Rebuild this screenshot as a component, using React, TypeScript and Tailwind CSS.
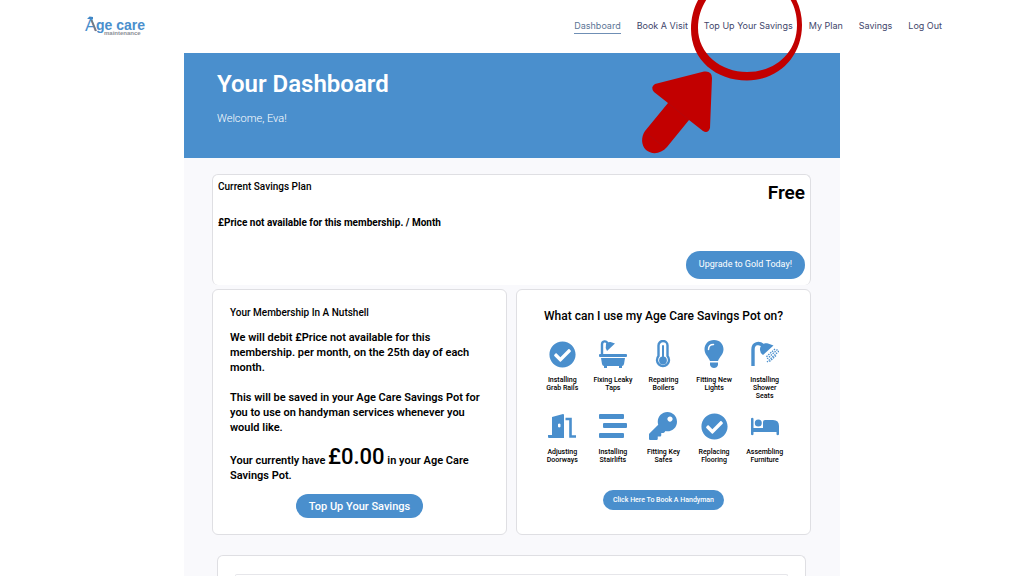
import type { ReactNode } from 'react';
import { FaCheckCircle, FaKey } from 'react-icons/fa';

const navItems = ['Dashboard', 'Book A Visit', 'Top Up Your Savings', 'My Plan', 'Savings', 'Log Out'];

function Logo() {
  return (
    <a href="#" aria-label="Age care maintenance" className="block">
      <svg width="62" height="24" viewBox="0 0 62 24">
        <text x="1" y="17" fontFamily="Liberation Sans, sans-serif" fontSize="17" fill="#4a8fcd">
          A
        </text>
        <text x="12" y="16" fontFamily="Liberation Sans, sans-serif" fontSize="14" fontWeight="700" fill="#4a8fcd">
          ge care
        </text>
        <text x="20" y="21" fontFamily="Liberation Sans, sans-serif" fontSize="6" fontWeight="700" fill="#8c8f96">
          maintenance
        </text>
        <path d="M3 5L5.500 2.500L9 3L9 5.500L6 5Z" fill="#3f86c6" />
        <path d="M7.500 6L12 17" stroke="#77797f" strokeWidth="1.800" fill="none" />
      </svg>
    </a>
  );
}

function BathIcon() {
  return (
    <svg width="28" height="28" viewBox="0 0 28 28" fill="currentColor">
      <path d="M3 15V4.500C3 0.500 7.500 0.500 8.500 3.500" stroke="currentColor" strokeWidth="2.400" fill="none" />
      <path d="M7 4Q9 1.500 11.500 2L16 3.500L8 11Q6 7.500 7 4Z" />
      <rect x="0" y="14" width="28" height="3" rx="1" />
      <path d="M2 18H26L25 24Q24.500 26 23 26V28H20V26H8V28H5V26Q3.500 26 3 24Z" />
    </svg>
  );
}

function ThermometerIcon() {
  return (
    <svg width="28" height="28" viewBox="0 0 28 28">
      <path
        d="M9.500 16V5.500a4.500 4.500 0 0 1 9 0V16a6 6 0 1 1-9 0Z"
        fill="white"
        stroke="currentColor"
        strokeWidth="2.400"
      />
      <path d="M14 6v13" stroke="currentColor" strokeWidth="2" strokeLinecap="round" />
      <circle cx="14" cy="20.500" r="3.900" fill="currentColor" />
    </svg>
  );
}

function BulbIcon() {
  return (
    <svg width="28" height="28" viewBox="0 0 28 28">
      <path
        d="M14 0C8 0 4.500 4.300 4.500 9.300C4.500 14.500 8.500 17 10 21H18C19.500 17 23.500 14.500 23.500 9.300C23.500 4.300 20 0 14 0Z"
        fill="currentColor"
      />
      <path d="M10 22.500H18V25Q17 28 14 28T10 25Z" fill="currentColor" />
      <path d="M8.500 9.500C8.500 6.500 10.500 4.500 13.500 4.500" stroke="white" strokeWidth="1.500" fill="none" strokeLinecap="round" />
    </svg>
  );
}

function ShowerIcon() {
  return (
    <svg width="28" height="28" viewBox="0 0 28 28">
      <path d="M2 26V9.500C2 3 8 2 12 5.500" stroke="currentColor" strokeWidth="3.400" fill="none" />
      <path d="M9 9C9 5 13 2.500 17 3.500L22.500 5.500L12 15Q8.500 12.500 9 9Z" fill="currentColor" />
      <g stroke="currentColor" strokeWidth="1.300" strokeDasharray="1.500 1">
        <path d="M24 9L15 17" />
        <path d="M26.500 9.500L16 19" />
        <path d="M28 11L16 22" />
        <path d="M25 15.500L18 22" />
      </g>
    </svg>
  );
}

function DoorIcon() {
  return (
    <svg width="28" height="28" viewBox="0 0 28 28">
      <path
        d="M0 23H4V5L15 2Q16 2 16 3V26H1Q0 26 0 25ZM12.500 13.500A1.300 1.500 0 1 0 10 13.500A1.300 1.500 0 1 0 12.500 13.500Z"
        fill="currentColor"
        fillRule="evenodd"
      />
      <path d="M17.500 7H22.500V24.500H28" stroke="currentColor" strokeWidth="2.600" fill="none" />
    </svg>
  );
}

function StairsIcon() {
  return (
    <svg width="28" height="28" viewBox="0 0 28 28" fill="currentColor">
      <rect x="0" y="2" width="25" height="5" rx="1" />
      <rect x="4" y="11" width="24" height="5" rx="1" />
      <rect x="0" y="21" width="25" height="5" rx="1" />
    </svg>
  );
}

function BedIcon() {
  return (
    <svg width="28" height="28" viewBox="0 0 28 28" fill="currentColor">
      <path d="M0 6.500Q1.200 5 2.500 6.500V16H12V10Q12 8 14 8H22Q28 8 28 14V22.500Q26.700 24 25.500 22.500V20H2.500V22.500Q1.200 24 0 22.500Z" />
      <circle cx="7.300" cy="11" r="3.500" />
    </svg>
  );
}

const services: { label: string; icon: ReactNode }[] = [
  { label: 'Installing Grab Rails', icon: <FaCheckCircle size={27} /> },
  { label: 'Fixing Leaky Taps', icon: <BathIcon /> },
  { label: 'Repairing Boilers', icon: <ThermometerIcon /> },
  { label: 'Fitting New Lights', icon: <BulbIcon /> },
  { label: 'Installing Shower Seats', icon: <ShowerIcon /> },
  { label: 'Adjusting Doorways', icon: <DoorIcon /> },
  { label: 'Installing Stairlifts', icon: <StairsIcon /> },
  { label: 'Fitting Key Safes', icon: <FaKey size={28} /> },
  { label: 'Replacing Flooring', icon: <FaCheckCircle size={27} /> },
  { label: 'Assembling Furniture', icon: <BedIcon /> },
];

// Red ring and arrow that point at the "Top Up Your Savings" link
function Highlight() {
  return (
    <svg
      className="absolute top-0 left-1/2 ml-[120px] pointer-events-none"
      width="180"
      height="160"
      viewBox="632 0 180 160"
      fill="#c20000"
      aria-hidden="true"
    >
      <path
        fillRule="evenodd"
        d="M691 29C691 -4 715 -29 748 -29C780 -29 802 -5 802 25C802 57 778 80.500 747 80.500C716 80.500 691 60 691 29ZM698 28C698 54 721 72 747 72C774 72 797 54 797 25C797 -3 777 -23 748 -23C719 -23 698 1 698 28Z"
      />
      <path d="M655 84L704 71.500Q712 70.500 712 78L710 128Q708 134 703 131L689 120L667 147C661 154 652 155 646 150C641 145 641 137 645 131L668 103L654 92Q650 87 655 84Z" />
      <path d="M668 103L689 120M645 132L665 148" stroke="#a80c14" strokeWidth="0.500" />
    </svg>
  );
}

export default function App() {
  return (
    <div className="relative flex min-h-screen flex-col overflow-hidden bg-white font-[Roboto,sans-serif] text-black">
      <header className="mx-auto flex h-[53px] w-full max-w-[860px] items-start justify-between pt-3.5 pl-0.5">
        <Logo />
        <nav className="mt-1 flex gap-4 font-[Inter,sans-serif] text-[9px] leading-[15px] text-[#42466b]">
          {navItems.map((item, i) => (
            <a
              key={item}
              href="#"
              className={i === 0 ? 'border-b border-[#6f8fb5] text-[#5c7596]' : 'border-b border-transparent'}
            >
              {item}
            </a>
          ))}
        </nav>
      </header>

      <main className="mx-auto flex w-full max-w-[656px] flex-1 flex-col bg-[#f9f9fc]">
        <section className="h-[105px] bg-[#4a8fcd] px-[33px] pt-4 text-white">
          <h1 className="text-[24px] leading-[30px] font-semibold">Your Dashboard</h1>
          <p className="mt-3 text-[11px] leading-4 font-light">Welcome, Eva!</p>
        </section>

        <div className="flex flex-1 flex-col pt-4 pr-[29px] pl-7">
          <section className="flex h-[111px] justify-between rounded-md border border-b-0 border-[#dfdfe3] bg-white px-[5px] pt-1.5">
            <div>
              <h2 className="text-[10px] leading-3 font-medium">Current Savings Plan</h2>
              <p className="mt-6 text-[10px] leading-3 font-bold">
                £Price not available for this membership. / Month
              </p>
            </div>
            <div className="flex flex-col items-end">
              <p className="text-[19px] leading-6 font-semibold">Free</p>
              <button className="mt-[46px] h-7 rounded-full bg-[#4a8fcd] px-[13px] text-[9px] text-white">
                Upgrade to Gold Today!
              </button>
            </div>
          </section>

          <div className="mt-1 grid grid-cols-2 gap-[9px]">
            <section className="rounded-md border border-[#dfdfe3] bg-white px-[17px] pt-[17px] pb-4 text-[11px] leading-[15px] font-semibold">
              <h2 className="text-[10px] leading-3 font-medium">Your Membership In A Nutshell</h2>
              <p className="mt-[11px]">
                We will debit £Price not available for this membership. per month, on the 25th day of each month.
              </p>
              <p className="mt-[15px]">
                This will be saved in your Age Care Savings Pot for you to use on handyman services whenever you would
                like.
              </p>
              <p className="mt-3">
                Your currently have <span className="text-[22px] leading-5 font-medium">£0.00</span> in your Age Care
                Savings Pot.
              </p>
              <div className="mt-[11px] flex justify-center">
                <button className="h-6 rounded-full bg-[#4a8fcd] px-[13px] text-[11px] font-medium text-white">
                  Top Up Your Savings
                </button>
              </div>
            </section>

            <section className="rounded-md border border-[#dfdfe3] bg-white px-5 pt-[18px] text-center font-medium">
              <h2 className="text-[12px] leading-4">What can I use my Age Care Savings Pot on?</h2>
              <ul className="mt-4 grid grid-cols-5 gap-y-[11px] text-[7px] leading-[8px]">
                {services.map(({ label, icon }) => (
                  <li key={label} className="flex h-[61px] flex-col items-center">
                    <span className="flex h-7 items-center text-[#4a8fcd]">{icon}</span>
                    <span className="mt-2 w-10">{label}</span>
                  </li>
                ))}
              </ul>
              <button className="mt-[17px] h-5 rounded-full bg-[#4a8fcd] px-2.5 text-[7px] text-white">
                Click Here To Book A Handyman
              </button>
            </section>
          </div>

          <section className="mx-[5px] mt-5 flex min-h-[21px] flex-1 flex-col rounded-t-md border border-b-0 border-[#dfdfe3] bg-white px-[17px] pt-[18px]">
            <div className="flex-1 rounded-t-md border border-b-0 border-[#e6e6ea]" />
          </section>
        </div>
      </main>

      <Highlight />
    </div>
  );
}
